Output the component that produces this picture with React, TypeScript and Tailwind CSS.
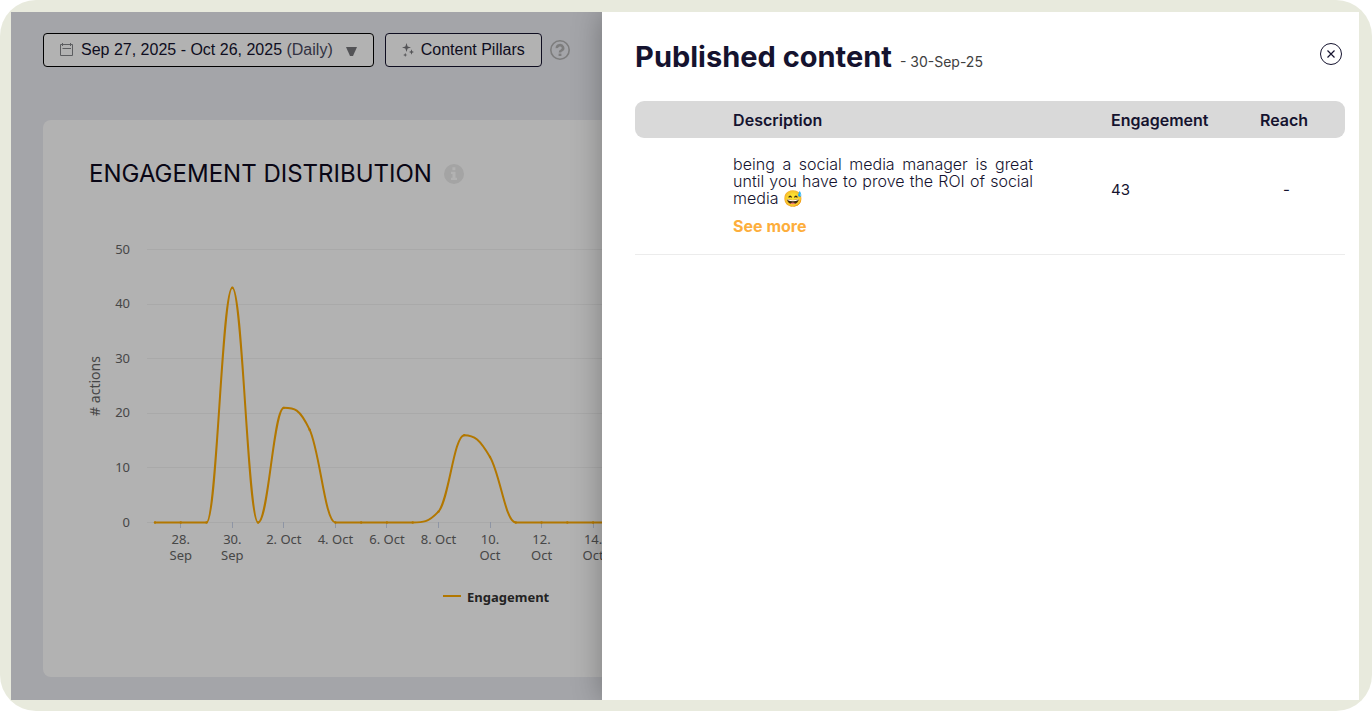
const values = [
  0, 0, 0, 43, 0, 21, 17, 0, 0, 0, 0, 2, 16, 12, 0, 0, 0, 0, 0, 0, 0, 0, 0, 0, 0, 0, 0, 0, 0, 0,
];

const ticks = [
  ['28.', 'Sep'], ['30.', 'Sep'], ['2. Oct'], ['4. Oct'], ['6. Oct'], ['8. Oct'], ['10.', 'Oct'],
  ['12.', 'Oct'], ['14.', 'Oct'], ['16.', 'Oct'], ['18.', 'Oct'], ['20.', 'Oct'], ['22.', 'Oct'],
];

const STEP = 25.77;
const px = (i: number) => 112 + i * STEP;
const py = (v: number) => 322.5 - v * 5.46;

type Point = { x: number; y: number; rx?: number; ry?: number };

/** Smooth path whose control points never overshoot the neighbouring values. */
function splinePath(data: number[]): string {
  const pts: Point[] = data.map((v, i) => ({ x: px(i), y: py(v) }));
  let d = `M ${pts[0].x} ${pts[0].y}`;
  for (let i = 1; i < pts.length; i++) {
    const p = pts[i];
    const last = pts[i - 1];
    const next = pts[i + 1];
    let lx = p.x;
    let ly = p.y;
    if (next) {
      lx = (1.5 * p.x + last.x) / 2.5;
      ly = (1.5 * p.y + last.y) / 2.5;
      const rx = (1.5 * p.x + next.x) / 2.5;
      let ry = (1.5 * p.y + next.y) / 2.5;
      const corr = ((ry - ly) * (rx - p.x)) / (rx - lx) + p.y - ry;
      ly += corr;
      ry += corr;
      if (ly > last.y && ly > p.y) {
        ly = Math.max(last.y, p.y);
        ry = 2 * p.y - ly;
      } else if (ly < last.y && ly < p.y) {
        ly = Math.min(last.y, p.y);
        ry = 2 * p.y - ly;
      }
      if (ry > next.y && ry > p.y) {
        ry = Math.max(next.y, p.y);
        ly = 2 * p.y - ry;
      } else if (ry < next.y && ry < p.y) {
        ry = Math.min(next.y, p.y);
        ly = 2 * p.y - ry;
      }
      p.rx = rx;
      p.ry = ry;
    }
    d += ` C ${last.rx ?? last.x} ${last.ry ?? last.y} ${lx} ${ly} ${p.x} ${p.y}`;
  }
  return d;
}

function EngagementChart() {
  return (
    <svg width="908" height="430" role="img" aria-label="Engagement" className="block font-['Noto_Sans',sans-serif] text-[13px]">
      {[0, 10, 20, 30, 40, 50].map((v) => (
        <g key={v}>
          <line x1="104" x2="880" y1={Math.floor(py(v)) + 0.5} y2={Math.floor(py(v)) + 0.5} stroke="#f2f2f2" strokeWidth="1" />
          <text x="87" y={Math.round(py(v) + 4)} textAnchor="end" fill="#666666">{v}</text>
        </g>
      ))}
      {ticks.map((lines, i) => {
        const x = px(1 + i * 2);
        return (
          <g key={i} fill="#666666" textAnchor="middle">
            <line x1={Math.floor(x) + 0.5} x2={Math.floor(x) + 0.5} y1="322" y2="328" stroke="#ccd6eb" />
            {lines.map((line, n) => (
              <text key={line} x={x} y={344 + n * 16}>{line}</text>
            ))}
          </g>
        );
      })}
      <text transform="translate(57 186) rotate(-90)" textAnchor="middle" fill="#666666" fontSize="14">
        # actions
      </text>
      <path d={splinePath(values)} fill="none" stroke="#ffab00" strokeWidth="2" strokeLinejoin="round" strokeLinecap="round" />
      {values.map((v, i) => (
        <circle key={i} cx={px(i)} cy={py(v)} r="1.2" fill="#ffab00" />
      ))}
      <line x1="400" x2="418" y1="396" y2="396" stroke="#ffab00" strokeWidth="2" />
      <text x="424" y="402" fontSize="13" fontWeight="700" fill="#333333">Engagement</text>
    </svg>
  );
}

function CalendarIcon() {
  return (
    <svg width="14" height="14" viewBox="0 0 14 14" fill="none" stroke="#85868a" className="shrink-0" aria-hidden="true">
      <path d="M0.5 1.5h12v11h-12zM2.5 5.5h8.5M2.5 0v3M10.5 0v3" />
    </svg>
  );
}

function SparklesIcon() {
  return (
    <svg width="12" height="14" viewBox="0 0 12 14" fill="#77777b" className="shrink-0" aria-hidden="true">
      <path d="M4.5 0L5.6 3.4L9 4.5L5.6 5.6L4.5 9L3.4 5.6L0 4.5L3.4 3.4Z" />
      <path d="M9.5 6.3L10.2 8.3L12 9L10.2 9.7L9.5 11.7L8.8 9.7L7 9L8.8 8.3Z" />
      <path d="M3.2 9.8L3.8 11.4L5.4 12L3.8 12.6L3.2 14L2.6 12.6L1 12L2.6 11.4Z" />
    </svg>
  );
}

function Dashboard() {
  return (
    <main className="flex min-h-full flex-col bg-[#ebecf2] px-8 pb-[23px] pt-[21px]">
      <div className="flex items-center font-['Liberation_Sans',Arial,sans-serif] text-base text-[#15132f]">
        <button className="flex h-[34px] items-center rounded border border-black bg-white px-4 whitespace-nowrap">
          <CalendarIcon />
          <span className="ml-[7px]">Sep 27, 2025 - Oct 26, 2025 <span className="text-[#4a4a60]">(Daily)</span></span>
          <svg width="11" height="9" viewBox="0 0 11 9" fill="#77787c" className="ml-[13px] mt-[2px]" aria-hidden="true">
            <path d="M0 0h11l-4 9h-3z" />
          </svg>
        </button>
        <button className="ml-[11px] flex h-[34px] items-center gap-[7px] rounded border border-[#15132f] bg-white px-4 whitespace-nowrap">
          <SparklesIcon />
          Content Pillars
        </button>
        <button className="ml-2" aria-label="Help">
          <svg width="20" height="20" viewBox="0 0 20 20" fill="none" aria-hidden="true">
            <circle cx="10" cy="10" r="9.2" stroke="#b3b3b3" strokeWidth="1.6" />
            <path d="M6.9 8.2a3.1 2.8 0 1 1 4.7 2.2Q10 11 10 12.4" stroke="#b3b3b3" strokeWidth="2.6" />
            <path d="M8.6 13.6h2.8v2.4h-2.8z" fill="#b3b3b3" />
          </svg>
        </button>
      </div>

      <section className="mt-[53px] flex-1 overflow-hidden rounded-lg bg-white pt-10">
        <h2 className="flex items-center gap-3 px-[46px] font-['Inter',sans-serif] text-2xl leading-7 text-[#0d0a20]">
          ENGAGEMENT DISTRIBUTION
          <svg width="20" height="20" viewBox="0 0 20 20" aria-hidden="true">
            <circle cx="10" cy="10" r="10" fill="#ebebeb" />
            <path d="M8.4 3.2h3v3h-3zM7 7.8h4.5v6h1.5v2.2h-6v-2.2h1.5v-3.8h-1.5z" fill="#ffffff" />
          </svg>
        </h2>
        <div className="mt-3">
          <EngagementChart />
        </div>
      </section>
    </main>
  );
}

function PublishedDrawer() {
  return (
    <aside
      role="dialog"
      aria-labelledby="drawer-title"
      className="absolute inset-y-0 right-0 w-[56.15%] overflow-auto bg-white pl-[33px] pr-[14px] pt-6 font-['Inter',sans-serif] text-[#15132f] shadow-[0_0_28px_rgba(0,0,0,0.3)]"
    >
      <header className="flex h-[42px] items-start justify-between">
        <div className="flex items-baseline gap-2">
          <h1 id="drawer-title" className="text-[29px] font-bold leading-[42px]">Published content</h1>
          <span className="text-sm text-[#404040]">- 30-Sep-25</span>
        </div>
        <button aria-label="Close" className="mr-[3px] mt-[7px]">
          <svg width="22" height="22" viewBox="0 0 22 22" fill="none" stroke="#15132f" aria-hidden="true">
            <circle cx="11" cy="11" r="10.5" />
            <path d="M7.5 7.5l7 7M14.5 7.5l-7 7" strokeWidth="1.2" />
          </svg>
        </button>
      </header>

      <table className="mt-[23px] w-full table-fixed border-separate border-spacing-0 text-left">
        <colgroup>
          <col className="w-[98px]" />
          <col />
          <col className="w-[149px]" />
          <col className="w-[85px]" />
        </colgroup>
        <thead>
          <tr className="h-[37px]">
            <td className="rounded-l-[9px] bg-[#d9d9d9]" />
            <th scope="col" className="bg-[#d9d9d9] font-semibold">Description</th>
            <th scope="col" className="bg-[#d9d9d9] font-semibold">Engagement</th>
            <th scope="col" className="rounded-r-[9px] bg-[#d9d9d9] font-semibold">Reach</th>
          </tr>
        </thead>
        <tbody>
          <tr>
            <td className="border-b border-[#ececec]" />
            <td className="border-b border-[#ececec] pb-[18px] pt-[18px]">
              <p className="w-[300px] text-justify font-light leading-[17px]">
                being a social media manager is great until you have to prove the ROI of social media 😅
              </p>
              <button className="mt-[9px] block font-bold leading-5 text-[#fdae3c]">See more</button>
            </td>
            <td className="border-b border-[#ececec] pb-3 text-[15px]">43</td>
            <td className="border-b border-[#ececec] pb-3 pl-[23px] text-[15px]">-</td>
          </tr>
        </tbody>
      </table>
    </aside>
  );
}

export default function App() {
  return (
    <div className="flex h-screen min-h-[640px] rounded-[36px] bg-[#e8eadd] pb-[11px] pl-[11px] pr-[13px] pt-3">
      <div className="relative min-w-0 flex-1 overflow-hidden">
        <Dashboard />
        <div className="absolute inset-0 bg-black/30" />
        <PublishedDrawer />
      </div>
    </div>
  );
}
